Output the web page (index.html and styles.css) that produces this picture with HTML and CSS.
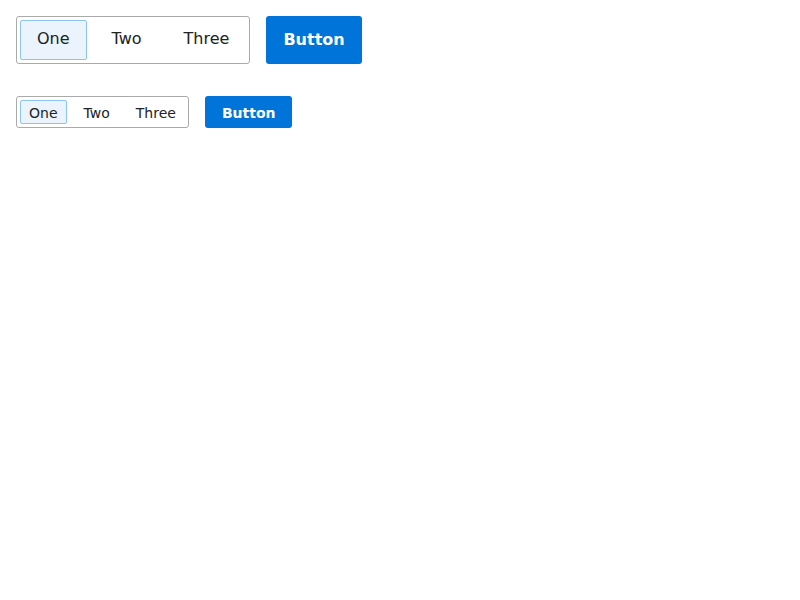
FILE: index.html
```html
<!DOCTYPE html>
<html>
<head>
<meta charset="utf-8">
<link rel="stylesheet" href="styles.css">
</head>
<body>
<div class="row row-lg">
  <div class="seg">
    <button class="seg-item active">One</button>
    <button class="seg-item">Two</button>
    <button class="seg-item">Three</button>
  </div>
  <button class="btn">Button</button>
</div>
<div class="row row-sm">
  <div class="seg">
    <button class="seg-item active">One</button>
    <button class="seg-item">Two</button>
    <button class="seg-item">Three</button>
  </div>
  <button class="btn">Button</button>
</div>
</body>
</html>
```
FILE: styles.css
```css
* { box-sizing: border-box; }
html, body { background: #fff; }
body {
  margin: 0;
  padding: 16px;
  font-family: "DejaVu Sans", sans-serif;
  color: #222;
  display: flex;
  flex-direction: column;
  gap: 32px;
  align-items: flex-start;
}
.row {
  display: flex;
  align-items: stretch;
  gap: 16px;
}
.seg {
  display: flex;
  gap: 8px;
  padding: 3px;
  border: 1px solid #aaa;
  border-radius: 3px;
  background: #fff;
}
.seg-item {
  font-family: inherit;
  color: #222;
  background: transparent;
  border: 1px solid transparent;
  border-radius: 2px;
  margin: 0;
  cursor: pointer;
}
.seg-item.active {
  background: #ebf4fd;
  border-color: #8cc4f2;
}
.btn {
  font-family: inherit;
  font-weight: bold;
  color: #fff;
  background: #0074d9;
  border: 0;
  border-radius: 3px;
  margin: 0;
}
.row-lg .seg-item {
  font-size: 16px;
  height: 40px;
  padding: 0 16px 4px;
}
.row-lg .btn {
  font-size: 16px;
  height: 48px;
  padding: 0 17px 1px;
}
.row-sm .seg-item {
  font-size: 14px;
  height: 24px;
  padding: 1px 8px 0;
}
.row-sm .btn {
  font-size: 14px;
  height: 32px;
  padding: 1px 17px 0;
}
```
